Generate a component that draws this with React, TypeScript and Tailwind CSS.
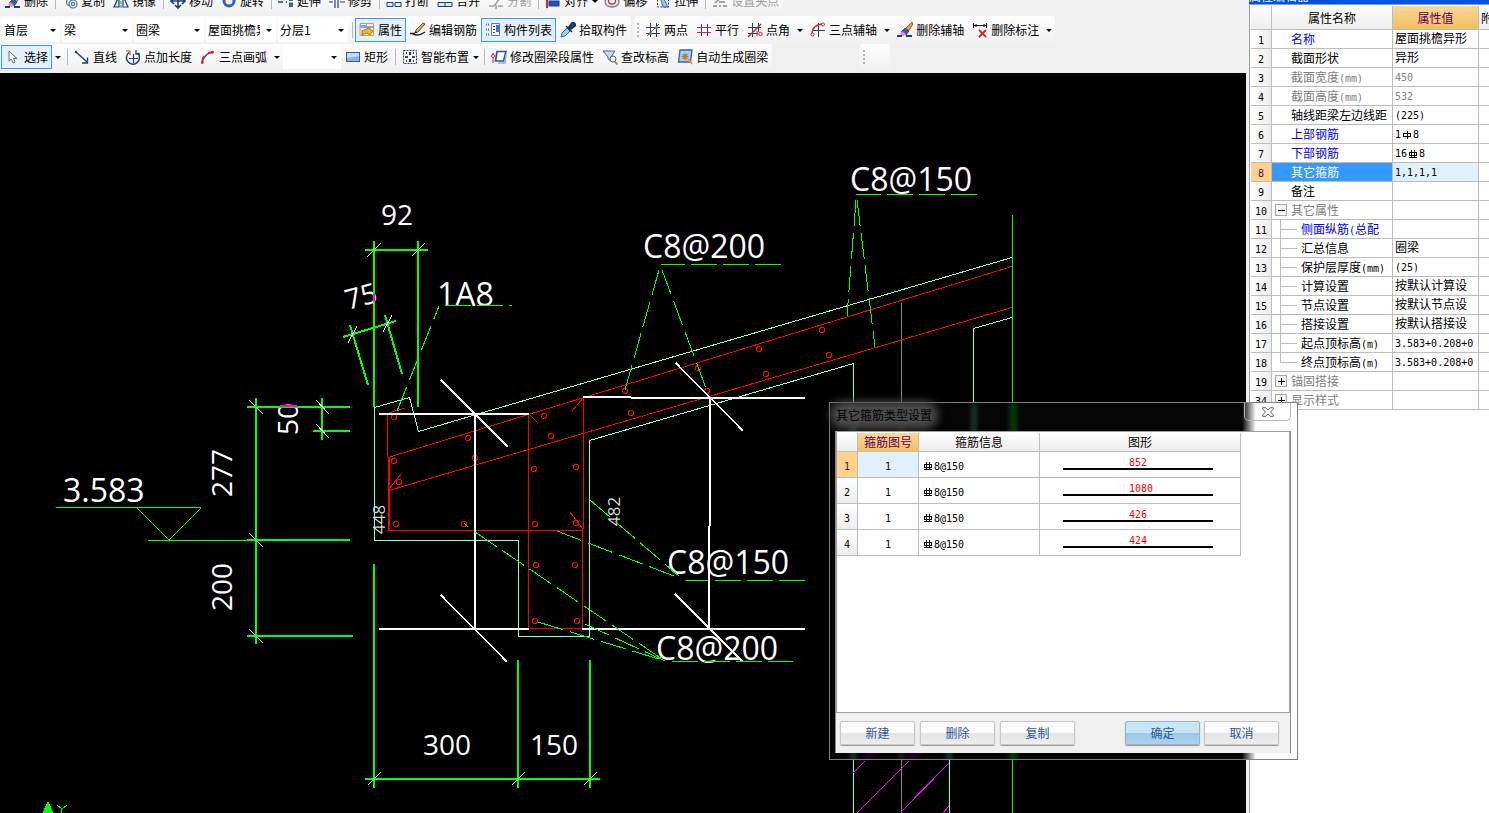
import React from "react";

const UI = "font-['Noto_Sans_CJK_SC',sans-serif]";

/* ---------- toolbar icons ---------- */

const N = "#1f3f77";
const R = "#d3262b";

const icons: Record<string, React.ReactNode> = {
  erase: (
    <>
      <path d="M15 0L8 7l3 3 5-8z" fill="#e9a23a" stroke="#7a4a10" strokeWidth=".8" />
      <path d="M8 6l4 3-3 4-5-3z" fill="#3a5f9a" stroke={N} strokeWidth=".8" />
      <path d="M5 9l4 3-2 2c-2 0-3-1-4-2z" fill="#e58bd0" />
      <path d="M0 14h5M9 14h6" stroke={N} strokeWidth="2" />
    </>
  ),
  copy: (
    <g fill="none" stroke="#5f7288" strokeWidth="1.2">
      <path d="M1 5l3-3M3 6l2-2" stroke={N} />
      <circle cx="8" cy="9" r="3.500" />
      <circle cx="11" cy="11" r="4" fill="#eef3f9" />
      <circle cx="11" cy="11" r="1.600" />
    </g>
  ),
  mirror: (
    <g fill="none" stroke={N} strokeWidth="1.2">
      <path d="M6 3v11H1z" fill="#cfe0f7" />
      <path d="M10 3v11h5z" fill="#fff" />
      <path d="M8 0v16" stroke="#4c86d8" strokeDasharray="3 1" />
    </g>
  ),
  move: (
    <path d="M8 1v14M1 8h14M5 4l3-3 3 3M5 12l3 3 3-3M4 5L1 8l3 3M12 5l3 3-3 3" fill="none" stroke={N} strokeWidth="1.6" />
  ),
  rotate: (
    <g fill="none">
      <circle cx="8" cy="8" r="5" stroke="#2c60c4" strokeWidth="3" />
      <path d="M4 5a5 5 0 0 1 6-2" stroke="#9cc2f5" strokeWidth="1.4" />
    </g>
  ),
  extend: (
    <path d="M0 9h5M8 9h1M12 2v12M14 2v12M0 6h8" fill="none" stroke={N} strokeWidth="1.6" strokeDasharray="6 1.5" />
  ),
  trim: <path d="M6 1v14M9 1v14M0 9h4M11 9h5M11 6h5" fill="none" stroke={N} strokeWidth="1.2" />,
  brk: <path d="M1 9.500h6v4H1zM9 9.500h6v4H9z" fill="#dbe8fa" stroke={N} />,
  join: <path d="M1 9.500h14v4H1zM8 10v3" fill="#dbe8fa" stroke={N} />,
  split: <path d="M1 13h5l7-9h2M1 4h4M10 13h5M8 1v3M8 12v4" fill="none" stroke="#a0a0a0" strokeWidth="1.5" />,
  align: (
    <>
      <path d="M2 0v15" stroke={R} strokeWidth="2" />
      <rect x="4" y="2" width="7" height="4" fill="#fff" stroke={N} />
      <rect x="4" y="8" width="10" height="5" fill="#1b4fd0" stroke={N} />
    </>
  ),
  offset: (
    <g fill="none" strokeWidth="1.3">
      <ellipse cx="8" cy="9" rx="7" ry="5" stroke="#6d7c94" fill="#e2e8f1" />
      <ellipse cx="8" cy="8" rx="3.500" ry="3" stroke={R} fill="#fff" />
    </g>
  ),
  stretch: (
    <>
      <path d="M2.500 3v11h11V7" fill="none" stroke={N} strokeDasharray="2 1.500" />
      <path d="M5 4h3l5 10H8z" fill="#9cc2f5" stroke={N} strokeWidth=".7" />
    </>
  ),
  pinch: <path d="M1 13h4M7 13h2M11 13h4M3 10l9-8M7 9h6" fill="none" stroke="#a0a0a0" strokeWidth="1.800" />,
  props: (
    <>
      <path d="M1 1.500h13.500v12H1z" fill="#fdf6e4" stroke="#e79a3c" />
      <path d="M1 1h7v3h6v2H1z" fill="#8ea4bf" />
      <path d="M2 2.500h5" stroke="#fff" />
      <path d="M3 9l4-2 3-1 4 3-3 4-3-2-5 2z" fill="#e7b634" stroke="#7a5a10" strokeWidth=".7" />
    </>
  ),
  editBar: (
    <>
      <path d="M0 11.500h5M3 12c4 2 8 1 12-2" fill="none" stroke="#222" strokeWidth="1.500" />
      <path d="M15 2L8 10l-3 1 1-3 7-7z" fill="#d9b04e" stroke="#3d3010" strokeWidth=".8" />
      <path d="M5 11l2-.5L6 9z" fill="#111" />
    </>
  ),
  list: (
    <>
      <path d="M1 2.500h4M1 7.500h4M1 12.500h4" stroke="#5a6a85" strokeWidth="2" strokeDasharray="1 1" />
      <path d="M6.500 1.500h8v12h-8z" fill="#f4f8ff" stroke="#5b7aa8" />
      <path d="M8 4.500h2M8 7.500h2M8 10.500h2" stroke={N} />
      <path d="M11 3h3v7h-3z" fill="#3e74cf" />
    </>
  ),
  pick: (
    <>
      <path d="M1 15l1-4 5-5 3 3-5 5z" fill="#9cd2f5" stroke="#2a6cb4" />
      <path d="M6 4l6 6M9 5l3-4c2-1 4 1 3 3l-4 3z" fill="#1f4f93" stroke="#12325f" strokeWidth="1.600" />
    </>
  ),
  twoPt: (
    <>
      <path d="M1 5.500h14M1 11.500h14M5.500 1v14M11.500 1v14" stroke={N} fill="none" />
      <path d="M2 14L14 2" stroke={R} />
      <circle cx="5.500" cy="11.500" r="1.600" fill="#3c9a35" />
      <circle cx="11.500" cy="5.500" r="1.600" fill="#3c9a35" />
    </>
  ),
  parallel: (
    <>
      <path d="M5.500 2v12M11.500 2v12" stroke={N} />
      <path d="M1 5.500h14M1 10.500h14" stroke={R} />
    </>
  ),
  ptAngle: (
    <>
      <path d="M5.500 1v14M1 5.500h13M11.500 1v9M1 11.500h10" stroke={N} />
      <path d="M1 15L14 2" stroke={R} strokeWidth="1.400" />
      <path d="M10 9v5" stroke={R} />
      <circle cx="13.500" cy="12" r="1.700" fill="none" stroke={R} />
    </>
  ),
  threeAxis: (
    <>
      <path d="M3 8.500h12M8.500 1v14" stroke={N} />
      <path d="M2 12c0-6 4-10 11-10" fill="none" stroke={R} strokeWidth="1.300" />
      <circle cx="2.500" cy="12.500" r="1.500" fill="#fff" stroke={R} />
      <circle cx="13" cy="2.500" r="1.500" fill="#fff" stroke={R} />
    </>
  ),
  delDim: (
    <>
      <path d="M1.500 1v5M14.500 1v5M2 3.500h12M4 2v3M12 2v3" stroke="#111" fill="none" />
      <path d="M7 8l7 7M14 8l-7 7" stroke={R} strokeWidth="1.800" />
    </>
  ),
  cursor: <path d="M4 2v10l2.500-2L8 14l2-1-1.500-3.500H12z" fill="#fff" stroke="#5d7291" />,
  line: (
    <>
      <path d="M2 3l11 10" stroke={N} strokeWidth="1.400" />
      <path d="M13.500 8.500V14H8" fill="none" stroke={N} strokeWidth="1.400" />
      <circle cx="2" cy="3" r="1.300" fill={N} />
    </>
  ),
  addLen: (
    <>
      <path d="M12.500 4A6.500 6.500 0 1 1 4 3.500" fill="none" stroke={N} strokeWidth="1.500" />
      <path d="M4 9.500h9M8.500 5v9" stroke={N} strokeWidth="1.200" />
      <path d="M11 1v4h4" fill="none" stroke={N} strokeWidth="1.300" />
      <path d="M1 2h4v4" fill="none" stroke={R} />
    </>
  ),
  arc: (
    <>
      <path d="M2 15C3 8 6 4 13 3" fill="none" stroke="#2c5fb0" strokeWidth="1.400" />
      <path d="M2 14c0-3 1-5 2-7M8 4l5-1" stroke={R} strokeWidth="1.800" fill="none" />
      <circle cx="12.500" cy="3" r="1.500" fill={R} />
      <circle cx="2.500" cy="13.500" r="1.200" fill={R} />
    </>
  ),
  rect: (
    <>
      <rect x="1.500" y="3.500" width="13" height="9" fill="#8fb2f3" stroke="#3059b8" />
      <path d="M2 4h12v3L2 9z" fill="#c9dbfb" />
    </>
  ),
  smart: (
    <>
      <rect x="1.500" y="1.500" width="13" height="13" fill="#eef4fd" stroke={N} strokeDasharray="2 1" />
      <path d="M8 3v3M8 10v3M3 8h3M10 8h3M4 4h1M11 4h1M4 12h1M11 12h1" stroke="#111" strokeWidth="1.700" />
    </>
  ),
  modify: (
    <>
      <path d="M6 2.500h9L12.500 12H4.500z" fill="#fff" stroke="#24589c" strokeWidth="1.700" />
      <path d="M7 14h7l1-9" fill="none" stroke="#86aee0" strokeWidth="1.300" />
      <path d="M2 4v10" stroke={R} />
      <circle cx="2" cy="7" r="1.500" fill="#fff" stroke={R} />
    </>
  ),
  check: (
    <>
      <path d="M1 2h12L9 8v4L6 10V8z" fill="#cbd9ee" stroke="#4c648a" />
      <circle cx="11" cy="10" r="3" fill="#e8f4ff" stroke="#4c648a" />
      <path d="M12.500 12.500l3 3" stroke="#c08a2a" strokeWidth="2" />
    </>
  ),
  auto: (
    <>
      <path d="M3 1h12l-1.500 12H1.500z" fill="#a9cdf5" stroke="#2b66b0" strokeWidth="1.300" />
      <path d="M8 4v7M4.500 7.500h7M5.500 5l5 5M10.500 5l-5 5" stroke="#c77416" strokeWidth="1.200" />
      <path d="M11 10l4 5" stroke="#d79a22" strokeWidth="2" />
    </>
  ),
};

function Icon({ name }: { name: string }) {
  return (
    <svg viewBox="0 0 16 16" className="h-4 w-4 shrink-0" aria-hidden="true">
      {icons[name]}
    </svg>
  );
}

function Tool({ icon, label, on = false, off = false }: { icon: string; label: string; on?: boolean; off?: boolean }) {
  return (
    <button
      type="button"
      disabled={off}
      className={`flex h-6 shrink-0 items-center gap-[3px] whitespace-nowrap border px-[3px] ${
        on ? "border-[#3399ff] bg-[#e4effb]" : "border-transparent"
      } ${off ? "text-[#a0a0a0]" : "text-black"}`}
    >
      <Icon name={icon} />
      <span>{label}</span>
    </button>
  );
}

function Caret() {
  return (
    <svg viewBox="0 0 6 3" className="h-[3px] w-[6px]" aria-hidden="true">
      <path d="M0 0h6L3 3z" />
    </svg>
  );
}

function Drop({ label, tight = false }: { label: string; tight?: boolean }) {
  return (
    <button
      type="button"
      aria-label={label}
      className={`flex h-6 shrink-0 items-center ${tight ? "w-2 justify-start" : "w-3 justify-center"}`}
    >
      <Caret />
    </button>
  );
}

function Sep() {
  return (
    <span className="flex w-[6px] shrink-0 justify-center">
      <span className="h-4 w-px bg-[#b8b8b8]" />
    </span>
  );
}

function Grip() {
  return (
    <span className="flex w-[7px] shrink-0 flex-col items-center gap-[2px]">
      {[0, 1, 2, 3].map((i) => (
        <span key={i} className="h-[2px] w-[2px] bg-[#b4b4b4]" />
      ))}
    </span>
  );
}

function Combo({ label, value, wide = true }: { label: string; value: string; wide?: boolean }) {
  return (
    <span className={`relative flex h-6 shrink-0 bg-white ${wide ? "w-[70px]" : "w-[58px]"}`}>
      <select aria-label={label} className="h-6 w-full appearance-none bg-transparent pl-[2px] pr-4 text-xs text-black">
        <option>{value}</option>
      </select>
      <span className="pointer-events-none absolute inset-y-0 right-1 flex items-center">
        <Caret />
      </span>
    </span>
  );
}

const strip = "flex items-center rounded-[3px] bg-linear-to-b from-[#fdfdfd] to-[#f1f1f1]";

function Toolbars() {
  return (
    <header className="flex shrink-0 flex-col bg-[#f0f0f0] text-xs">
      <div className="flex h-4 items-start overflow-hidden">
        <div className={`${strip} -mt-[11px] h-6 pl-px`}>
          <Tool icon="erase" label="删除" />
          <Sep />
          <Tool icon="copy" label="复制" />
          <Tool icon="mirror" label="镜像" />
          <Sep />
          <Tool icon="move" label="移动" />
          <Tool icon="rotate" label="旋转" />
          <Sep />
          <Tool icon="extend" label="延伸" />
          <Tool icon="trim" label="修剪" />
          <Sep />
          <Tool icon="brk" label="打断" />
          <Tool icon="join" label="合并" />
          <Tool icon="split" label="分割" off />
          <Sep />
          <Tool icon="align" label="对齐" />
          <Drop label="对齐选项" tight />
          <Tool icon="offset" label="偏移" />
          <Tool icon="stretch" label="拉伸" />
          <Sep />
          <Tool icon="pinch" label="设置夹点" off />
        </div>
      </div>
      <div className="flex h-[28px] gap-[3px]">
        <div className={`${strip} pl-[2px]`}>
          <div className="mr-px flex gap-[2px]">
            <Combo label="楼层" value="首层" wide={false} />
            <Combo label="构件大类" value="梁" />
            <Combo label="构件类型" value="圈梁" />
            <Combo label="构件名称" value="屋面挑檐异形" />
            <Combo label="分层" value="分层1" />
          </div>
          <Sep />
          <Tool icon="props" label="属性" on />
          <Tool icon="editBar" label="编辑钢筋" />
          <Tool icon="list" label="构件列表" on />
          <Tool icon="pick" label="拾取构件" />
        </div>
        <div className={strip}>
          <Grip />
          <Tool icon="twoPt" label="两点" />
          <Tool icon="parallel" label="平行" />
          <Tool icon="ptAngle" label="点角" />
          <Drop label="点角选项" />
          <Tool icon="threeAxis" label="三点辅轴" />
          <Drop label="三点辅轴选项" />
          <Tool icon="erase" label="删除辅轴" />
          <Tool icon="delDim" label="删除标注" />
          <Drop label="删除标注选项" />
        </div>
      </div>
      <div className="flex h-[29px] gap-[88px] pb-[3px]">
        <div className={`${strip} pl-px`}>
          <Tool icon="cursor" label="选择" on />
          <Drop label="选择选项" />
          <Sep />
          <Tool icon="line" label="直线" />
          <Tool icon="addLen" label="点加长度" />
          <Tool icon="arc" label="三点画弧" />
          <Drop label="三点画弧选项" />
          <Combo label="弧参数" value="" wide={false} />
          <Tool icon="rect" label="矩形" />
          <Sep />
          <Tool icon="smart" label="智能布置" />
          <Drop label="智能布置选项" tight />
          <Sep />
          <Tool icon="modify" label="修改圈梁段属性" />
          <Tool icon="check" label="查改标高" />
          <Tool icon="auto" label="自动生成圈梁" />
        </div>
        <div className={`${strip} w-[30px]`}>
          <Grip />
        </div>
      </div>
    </header>
  );
}

/* ---------- section drawing ---------- */

const bars = [
  [394, 417], [468, 438], [475, 458], [544, 416], [551, 436], [631, 413], [625, 391],
  [394, 461], [399, 482], [534, 469], [576, 467], [396, 524], [464, 524], [535, 524],
  [576, 523], [536, 565], [575, 565], [535, 621], [577, 621], [698, 368], [707, 391],
  [759, 349], [822, 330], [766, 374], [829, 355],
];

function Drawing() {
  return (
    <svg className="h-full w-full" role="img" aria-label="圈梁截面">
      <g transform="translate(0 -73)" fill="none">
        <g fill="#fff" fontFamily="'Open Sans', 'Noto Sans', sans-serif">
          <g fontSize="32">
            <text x="63" y="502">3.583</text>
            <text x="437" y="306">1A8</text>
            <text x="643" y="258">C8@200</text>
            <text x="850" y="191">C8@150</text>
            <text x="667" y="574">C8@150</text>
            <text x="656" y="660">C8@200</text>
          </g>
          <g fontSize="28">
            <text x="381" y="225">92</text>
            <text transform="translate(348 310) rotate(-15)">75</text>
            <text transform="translate(298 435) rotate(-90)">50</text>
            <text transform="translate(232 497) rotate(-90)">277</text>
            <text transform="translate(232 611) rotate(-90)">200</text>
            <text x="423" y="755">300</text>
            <text x="530" y="755">150</text>
          </g>
          <g fontSize="17" fill="#d8d8d8">
            <text transform="translate(385 534) rotate(-90)">448</text>
            <text transform="translate(620 526) rotate(-90)">482</text>
          </g>
        </g>

        <g shapeRendering="crispEdges">
          <path
            stroke="#7fffd4"
            d="M418.500 431.500L1012 257.500M374.500 407.500L409.500 397.500L418.500 431.500M374.500 407.500V540.500H518.500V636.500H589.500V440.500L853.500 363.500V813M973.500 410V328.500L1012 317.500M949.500 755V813"
          />
          <path stroke="#8a8a8a" d="M901.500 303V813" />
          <path stroke="#f0f" d="M865 761L853 773M909 761L857 813M949 763L901 812M949 806L943 813" />

          <g stroke="#f00">
            <path d="M405 408L387.500 413.500V457M388 457.500L1012 266.500M389 490.500L1012 307.500M387 530.500H583M528.500 414V629M583.500 397V529M582.500 529V629M529 628.500H583" />
            <path d="M388.500 457V531" strokeWidth="2" />
            <path d="M529 414L538 423M583 398L572 411M389 489L402 473M570 512L583 529" />
            {bars.map(([x, y]) => (
              <circle key={`${x}-${y}`} cx={x} cy={y} r="2.500" />
            ))}
          </g>

          <g stroke="#fff">
            <g strokeWidth="2">
              <path d="M379 414H529M475 414V629M379 629H529M583 397H631M631 398H805M710 398V526M709 526V629M582 629H805" />
            </g>
            <path
              strokeWidth="1.500"
              d="M441 380L508 447M441 595L507 662M676 363L743 431M675 594L743 662"
            />
          </g>

          <g stroke="#0f0">
            <g strokeWidth="2">
              <path d="M365 250H428M374 241V407M418 241V407" />
              <path d="M343 337L396 321M350 325L368 385M385 315L402 374" />
              <path d="M256 398V644M247 407H350M322 398V440M313 431H350M247 540H350M247 636H353" />
              <path d="M365 779H600M374 564V788M518 660V788M590 660V788" />
            </g>
            <path d="M1012.500 215V813M56 507.500H201M148 540.500H256M137 508L169 540L201 508" />
            <path d="M57 805L62 809L67 805M61.500 809V813" />
            <path d="M48 802L53 813H43Z" fill="#0f0" />
            <path d="M445 305.500H471M477 305.500H503M509 305.500H512" />
            <path d="M661 264.500H685M691 264.500H717M723 264.500H749M755 264.500H781" />
            <path d="M856 194.500H881M887 194.500H913M919 194.500H945M951 194.500H977" />
            <path d="M685 580.500H708M715 580.500H741M747 580.500H773M779 580.500H805" />
            <path d="M672 661.500H698M704 661.500H730M736 661.500H762M768 661.500H793" />
            <g strokeDasharray="26 7">
              <path d="M397 411L439 306" />
              <path d="M659 270L625 390" />
              <path d="M662 270L707 391" />
              <path d="M856 200L847 316" />
              <path d="M857 200L875 347" />
              <path d="M590 500L679 576" />
              <path d="M557 531L679 578" />
              <path d="M475 532L665 661" />
              <path d="M538 622L665 661" />
              <path d="M585 624L665 661" />
            </g>
            <path d="M464 523L468 527" />
          </g>

          <path stroke="#f0f" strokeWidth="2" d="M374 294V301M280 406H297" />

          <path
            stroke="#fff"
            d="M367 257L381 243M412 256L425 243M348 343L357 326M383 332L392 315M249 400L263 414M316 400L329 414M316 424L329 438M249 533L263 547M249 629L263 643M368 785L381 772M512 785L525 772M584 785L597 772"
          />
        </g>
      </g>
    </svg>
  );
}

/* ---------- property panel ---------- */

/* Half-width characters are set in a six-pixel mono face beside twelve-pixel Han characters. */
function Song({ text }: { text: string }) {
  return (
    <>
      {text.split(/([\x20-\x7e]+|[ΦΨ])/).map((part, i) => {
        if (part === "Φ" || part === "Ψ") return <Bar key={i} heavy={part === "Ψ"} />;
        return /^[\x20-\x7e]+$/.test(part) ? (
          <span key={i} className="font-['DejaVu_Sans_Mono',monospace] text-[10px] leading-none">
            {part}
          </span>
        ) : (
          part
        );
      })}
    </>
  );
}

function Bar({ heavy }: { heavy: boolean }) {
  return (
    <svg viewBox="0 0 12 10" className="inline-block h-[10px] w-3 align-middle" role="img" aria-label="钢筋级别">
      <g fill="none" stroke="#000" shapeRendering="crispEdges">
        <path d="M2.500 3.500h7v3h-7z" />
        {heavy ? <path d="M4.500 1v8M7.500 1v8M2 8.500h8" /> : <path d="M6.500 1v8" />}
      </g>
    </svg>
  );
}

type Row = { n: number; name: string; value?: string; tone?: "blue" | "gray"; kind?: "child" | "last" | "open" | "closed" };

const rows: Row[] = [
  { n: 1, name: "名称", value: "屋面挑檐异形", tone: "blue" },
  { n: 2, name: "截面形状", value: "异形" },
  { n: 3, name: "截面宽度(mm)", value: "450", tone: "gray" },
  { n: 4, name: "截面高度(mm)", value: "532", tone: "gray" },
  { n: 5, name: "轴线距梁左边线距", value: "(225)" },
  { n: 6, name: "上部钢筋", value: "1Φ8", tone: "blue" },
  { n: 7, name: "下部钢筋", value: "16Ψ8", tone: "blue" },
  { n: 8, name: "其它箍筋", value: "1,1,1,1" },
  { n: 9, name: "备注" },
  { n: 10, name: "其它属性", tone: "gray", kind: "open" },
  { n: 11, name: "侧面纵筋(总配", tone: "blue", kind: "child" },
  { n: 12, name: "汇总信息", value: "圈梁", kind: "child" },
  { n: 13, name: "保护层厚度(mm)", value: "(25)", kind: "child" },
  { n: 14, name: "计算设置", value: "按默认计算设", kind: "child" },
  { n: 15, name: "节点设置", value: "按默认节点设", kind: "child" },
  { n: 16, name: "搭接设置", value: "按默认搭接设", kind: "child" },
  { n: 17, name: "起点顶标高(m)", value: "3.583+0.208+0", kind: "child" },
  { n: 18, name: "终点顶标高(m)", value: "3.583+0.208+0", kind: "last" },
  { n: 19, name: "锚固搭接", tone: "gray", kind: "closed" },
  { n: 34, name: "显示样式", tone: "gray", kind: "closed" },
];

const grid = "border-b border-r border-[#bdbdbd]";
const head = "bg-linear-to-b from-white to-[#ececec] font-normal";
const headOn = "bg-linear-to-b from-[#fad79a] to-[#f3bd5c] font-normal text-[#5c005c]";

function Tree({ kind }: { kind?: Row["kind"] }) {
  if (kind === "child" || kind === "last") {
    return (
      <svg className="h-[18px] w-[29px] shrink-0" aria-hidden="true" shapeRendering="crispEdges">
        <path d={kind === "child" ? "M8.500 0V18M9 9.500H25" : "M8.500 0V9.500H25"} fill="none" stroke="#bdbdbd" />
      </svg>
    );
  }
  if (kind === "open" || kind === "closed") {
    return (
      <button type="button" aria-label={kind === "open" ? "折叠" : "展开"} className="w-[19px] shrink-0 pl-[3px]">
        <svg viewBox="0 0 12 12" className="h-3 w-3" shapeRendering="crispEdges">
          <rect x=".5" y=".5" width="11" height="11" fill="#f6f6f6" stroke="#a8a8a8" />
          <path d={kind === "open" ? "M3 6.500H10" : "M3 6.500H10M6.500 3V10"} stroke="#000" fill="none" />
        </svg>
      </button>
    );
  }
  return <span className="w-[19px] shrink-0" />;
}

function Properties() {
  return (
    <aside className="flex w-[243px] shrink-0 flex-col overflow-hidden border-l-[3px] border-[#f0f0f0] bg-white text-xs">
      <div className="flex h-1 items-end overflow-hidden bg-[#0054e3]">
        <h2 className="leading-[16px] text-white">属性编辑器</h2>
      </div>
      <div className="flex flex-1 flex-col overflow-hidden border-l border-t border-[#a0a0a0] pl-px pt-px">
        <table className="w-full table-fixed border-separate border-spacing-0 leading-[18px]">
          <colgroup>
            <col className="w-[21px]" />
            <col className="w-[121px]" />
            <col className="w-[86px]" />
            <col />
          </colgroup>
          <thead>
            <tr className="h-6">
              <th className={`${grid} ${head}`} aria-label="序号" />
              <th className={`${grid} ${head}`}>属性名称</th>
              <th className={`${grid} ${headOn}`}>属性值</th>
              <th className={`border-b border-[#bdbdbd] pl-[2px] text-left whitespace-nowrap overflow-hidden ${head}`}>附加</th>
            </tr>
          </thead>
          <tbody>
            {rows.map((r) => {
              const on = r.n === 8;
              const tone = r.tone === "blue" ? "text-[#0000ff]" : r.tone === "gray" ? "text-[#808080]" : "text-black";
              return (
                <tr key={r.n} className="h-[19px]">
                  <th
                    className={`${grid} p-0 text-center font-normal ${
                      on ? "bg-[#ffd28a] text-[#5c005c]" : "bg-linear-to-r from-white to-[#ececec]"
                    }`}
                  >
                    <div className="h-[18px]">
                      <Song text={String(r.n)} />
                    </div>
                  </th>
                  <td className={`${grid} overflow-hidden p-0 ${on ? "bg-[#3399ff] text-white" : tone}`}>
                    <div className="flex h-[18px] items-center whitespace-nowrap">
                      <Tree kind={r.kind} />
                      <span>
                        <Song text={r.name} />
                      </span>
                    </div>
                  </td>
                  <td
                    className={`${grid} overflow-hidden whitespace-nowrap p-0 pl-[2px] ${on ? "bg-[#e0f0ff]" : ""} ${
                      r.tone === "gray" ? "text-[#808080]" : "text-black"
                    }`}
                  >
                    <div className="h-[18px] leading-[16px]">
                      <Song text={r.value ?? ""} />
                    </div>
                  </td>
                  <td className="border-b border-[#bdbdbd] p-0" />
                </tr>
              );
            })}
          </tbody>
        </table>
      </div>
    </aside>
  );
}

/* ---------- stirrup dialog ---------- */

const stirrups = [852, 1080, 426, 424];

function PushButton({ label, primary = false }: { label: string; primary?: boolean }) {
  return (
    <button
      type="button"
      className={`h-6 w-[75px] rounded-[2px] border text-xs text-[#2f55a4] shadow-[0_1px_1px_#999] ${
        primary
          ? "border-[#9ab0c4] bg-linear-to-b from-[#c4e7f8] from-50% via-[#9cc7ea] via-50% to-[#a9d3ee]"
          : "border-[#c6c6c6] bg-linear-to-b from-[#fbfbfb] from-50% via-[#e3e3e3] via-50% to-[#ededed]"
      }`}
    >
      {label}
    </button>
  );
}

function StirrupDialog() {
  return (
    <section
      role="dialog"
      aria-labelledby="stirrup-title"
      className="absolute left-[829px] top-[402px] w-[469px] border border-[#808080] bg-[linear-gradient(90deg,#050505_412px,#fff_426px)] text-xs"
    >
      <svg className="absolute inset-0 h-full w-full" aria-hidden="true">
        <g className="blur-[2px]" strokeWidth="6">
          <path d="M23 0V360M144 0V30M119 345V360" stroke="#17332c" />
          <path d="M71 0V360" stroke="#1c1c1c" />
          <path d="M183 0V360" stroke="#033a03" strokeWidth="8" />
          <path d="M34 357L48 347M78 357L90 347" stroke="#2c002c" />
        </g>
      </svg>
      <div className="relative flex h-7 items-start justify-between px-[6px]">
        <h2 id="stirrup-title" className="mt-1 rounded-full bg-[#4a4a4a] leading-[16px] text-black shadow-[0_0_8px_6px_#4a4a4a]">
          其它箍筋类型设置
        </h2>
        <button
          type="button"
          aria-label="关闭"
          className="flex h-[18px] w-[47px] items-center justify-center rounded-b-[5px] border border-t-0 border-[#b8b8b8]"
        >
          <svg viewBox="0 0 12 10" className="h-[10px] w-3" aria-hidden="true">
            <path d="M.7.700h3L6 3.200 8.300.700h3v1.500L8.500 5l2.800 2.800v1.500h-3L6 6.800 3.700 9.300h-3V7.800L3.500 5 .7 2.200z" fill="#fff" stroke="#555b6e" />
          </svg>
        </button>
      </div>
      <div className="relative mb-[6px] ml-[5px] mr-[6px] border-x border-[#8c8c8c] bg-[#f0f0f0]">
        <div className="h-[282px] border border-[#a0a0a0] bg-white pt-px">
          <table className="w-[404px] table-fixed border-separate border-spacing-0">
            <colgroup>
              <col className="w-[21px]" />
              <col className="w-[61px]" />
              <col className="w-[121px]" />
              <col className="w-[201px]" />
            </colgroup>
            <thead>
              <tr className="h-[19px] leading-[18px]">
                <th className={`${grid} ${head} p-0`} aria-label="序号" />
                <th className={`${grid} ${headOn} p-0`}>箍筋图号</th>
                <th className={`${grid} ${head} p-0`}>箍筋信息</th>
                <th className={`${grid} ${head} p-0`}>图形</th>
              </tr>
            </thead>
            <tbody>
              {stirrups.map((len, i) => (
                <tr key={len} className="h-[26px] leading-[18px]">
                  <th className={`${grid} p-0 font-normal ${i === 0 ? "bg-[#ffd28a] text-[#5c005c]" : head}`}>
                    <Song text={String(i + 1)} />
                  </th>
                  <td className={`${grid} p-0 text-center ${i === 0 ? "bg-[#e0f0ff]" : ""}`}>
                    <Song text="1" />
                  </td>
                  <td className={`${grid} p-0 pl-[3px]`}>
                    <Song text="Ψ8@150" />
                  </td>
                  <td className={`${grid} p-0 pl-[23px]`}>
                    <div className="mb-[6px] flex h-4 w-[150px] justify-center border-b-2 border-black pl-6 leading-[14px] text-[#f00]">
                      <span className="w-[42px]">
                        <Song text={String(len)} />
                      </span>
                    </div>
                  </td>
                </tr>
              ))}
            </tbody>
          </table>
        </div>
        <div className="flex h-10 items-center justify-between pl-1 pr-[11px]">
          <div className="flex gap-[5px]">
            <PushButton label="新建" />
            <PushButton label="删除" />
            <PushButton label="复制" />
          </div>
          <div className="flex gap-[4px]">
            <PushButton label="确定" primary />
            <PushButton label="取消" />
          </div>
        </div>
      </div>
    </section>
  );
}

export default function App() {
  return (
    <div className={`relative flex h-screen overflow-hidden bg-[#f0f0f0] text-black ${UI}`}>
      <main className="flex min-w-0 flex-1 flex-col overflow-hidden">
        <Toolbars />
        <div className="min-h-0 flex-1 bg-black">
          <Drawing />
        </div>
      </main>
      <Properties />
      <StirrupDialog />
    </div>
  );
}
